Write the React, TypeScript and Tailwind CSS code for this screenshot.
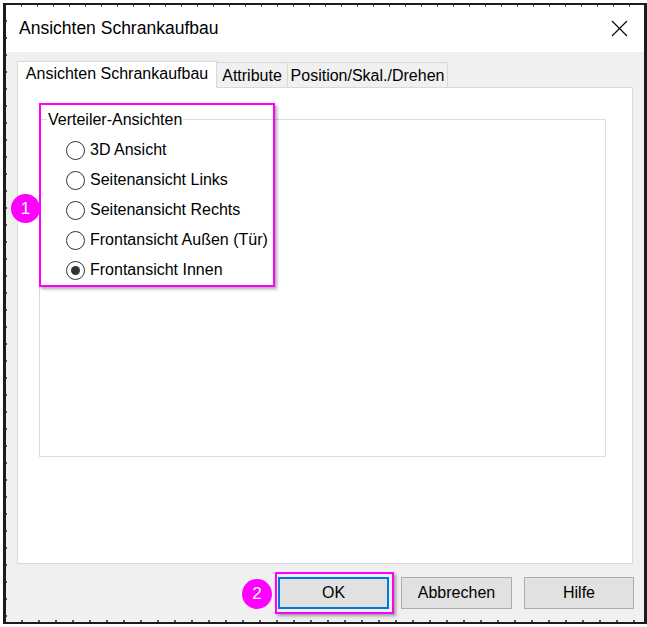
import React, { useState } from 'react';

const views = [
  '3D Ansicht',
  'Seitenansicht Links',
  'Seitenansicht Rechts',
  'Frontansicht Außen (Tür)',
  'Frontansicht Innen',
];

const tabs = [
  { label: 'Ansichten Schrankaufbau', width: 'w-[200px]' },
  { label: 'Attribute', width: 'w-[72px]' },
  { label: 'Position/Skal./Drehen', width: 'w-[161px]' },
];

const App: React.FC = () => {
  const [view, setView] = useState('Frontansicht Innen');
  const [tab, setTab] = useState(0);

  return (
    <div className="relative w-[647px] h-[627px] bg-white pt-[3px] pl-[3px] pb-[3px] font-['Liberation_Sans',Arial,sans-serif] text-black">
      <div className="relative h-full flex flex-col border-[#1c1c1c] border-t-2 border-l-[3px] border-r-[3px] border-b-2">
        {/* ruler ticks along the frame */}
        <div className="absolute left-0 right-0 top-0 h-[2px] bg-[repeating-linear-gradient(90deg,transparent_0_15px,#666_15px_16px)]" />
        <div className="absolute left-0 right-0 bottom-0 h-[2px] bg-[repeating-linear-gradient(90deg,transparent_0_15px,#555_15px_17px)]" />
        <div className="absolute left-0 top-0 bottom-0 w-px bg-[repeating-linear-gradient(180deg,transparent_0_15px,#555_15px_17px)]" />

        {/* title bar */}
        <div className="h-[47px] shrink-0 bg-white flex items-center justify-between pl-[13px] pr-[16px]">
          <span className="text-[17.5px]">Ansichten Schrankaufbau</span>
          <svg width="17" height="17" viewBox="0 0 17 17">
            <path d="M1 1L16 16M16 1L1 16" stroke="#000" strokeWidth="1.1" />
          </svg>
        </div>

        {/* dialog body */}
        <div className="flex-1 flex flex-col bg-[#f0f0f0] pl-[11px] pr-[10px] pt-[8px] pb-[13px]">
          <div className="h-[27px] flex items-end shrink-0">
            {tabs.map((t, i) => (
              <button
                key={t.label}
                onClick={() => setTab(i)}
                className={`${t.width} flex items-center justify-center text-[16px] border-t border-l border-r border-[#d9d9d9] ${
                  tab === i ? 'h-[27px] bg-white relative -mb-px z-10 pb-[3px]' : 'h-[25px] bg-[#f0f0f0] -ml-px first:ml-0 pt-px'
                }`}
              >
                {t.label}
              </button>
            ))}
          </div>

          <div className="flex-1 mr-px bg-white border border-[#d9d9d9] pt-[31px] pl-[21px] pr-[26px] pb-[106px]">
            <div className="relative h-full border border-[#dcdcdc]">
              <span className="absolute left-[7px] -top-[9px] bg-white px-[1px] text-[16px] leading-[18px]">
                Verteiler-Ansichten
              </span>
              <div className="pt-[15px] pl-[26px] flex flex-col">
                {views.map((v) => (
                  <label key={v} className="h-[30px] flex items-center gap-[5px] text-[16px] cursor-default" onClick={() => setView(v)}>
                    <span className="w-[19px] h-[19px] rounded-full border border-[#333] bg-white flex items-center justify-center">
                      {view === v && <span className="w-[9px] h-[9px] rounded-full bg-[#333]" />}
                    </span>
                    {v}
                  </label>
                ))}
              </div>
            </div>
          </div>

          <div className="mt-[13px] h-[32px] shrink-0 flex justify-end gap-[12px]">
            <button className="w-[111px] h-[32px] bg-[#e1e1e1] border-2 border-[#0078d7] text-[16px]">OK</button>
            <button className="w-[111px] h-[32px] bg-[#e1e1e1] border border-[#adadad] text-[16px]">Abbrechen</button>
            <button className="w-[110px] h-[32px] bg-[#e1e1e1] border border-[#adadad] text-[16px]">Hilfe</button>
          </div>
        </div>
      </div>

      {/* annotations */}
      <div className="absolute left-[39px] top-[103px] w-[236px] h-[184px] border-2 border-[#ff00ff] shadow-[2px_2px_3px_rgba(0,0,0,0.35)]" />
      <div className="absolute left-[11px] top-[194px] w-[29px] h-[29px] rounded-full bg-[#ff00ff] text-white text-[17px] flex items-center justify-center">1</div>
      <div className="absolute left-[275px] top-[572px] w-[119px] h-[42px] border-2 border-[#ff00ff] shadow-[2px_2px_3px_rgba(0,0,0,0.35)]" />
      <div className="absolute left-[242px] top-[579px] w-[30px] h-[30px] rounded-full bg-[#ff00ff] text-white text-[17px] flex items-center justify-center">2</div>
    </div>
  );
};

export default App;
